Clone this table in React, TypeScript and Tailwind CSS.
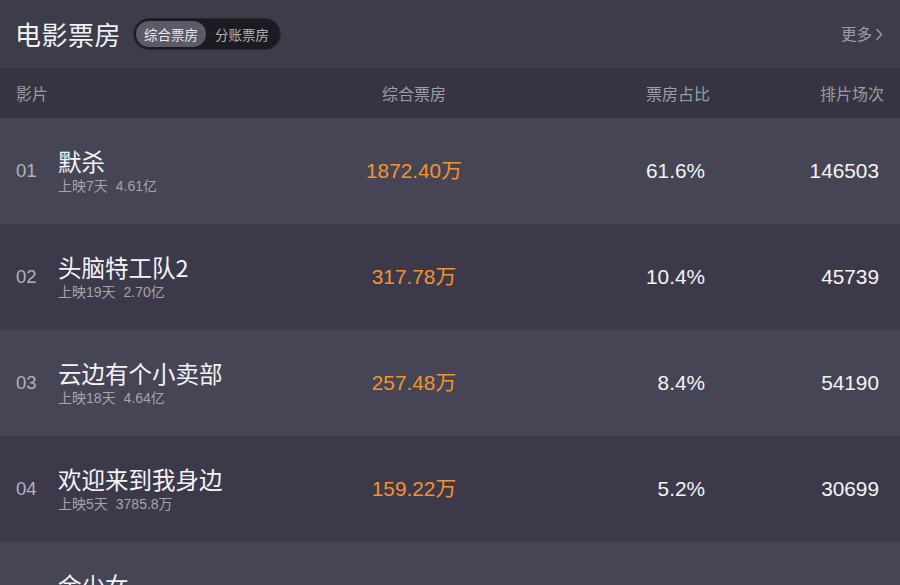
import React from "react";

const rows = [
  { rank: "01", name: "默杀", days: "上映7天", total: "4.61亿", box: "1872.40万", pct: "61.6%", shows: "146503" },
  { rank: "02", name: "头脑特工队2", days: "上映19天", total: "2.70亿", box: "317.78万", pct: "10.4%", shows: "45739" },
  { rank: "03", name: "云边有个小卖部", days: "上映18天", total: "4.64亿", box: "257.48万", pct: "8.4%", shows: "54190" },
  { rank: "04", name: "欢迎来到我身边", days: "上映5天", total: "3785.8万", box: "159.22万", pct: "5.2%", shows: "30699" },
  { rank: "05", name: "余少女", days: "上映3天", total: "1203.5万", box: "98.61万", pct: "3.2%", shows: "21034" },
];

const cjk = { fontFamily: '"Noto Sans CJK SC", "Noto Sans", sans-serif' };
const num = { fontFamily: '"Liberation Sans", Arial, "Noto Sans CJK SC", sans-serif' };

export default function App() {
  return (
    <div className="w-[900px] h-[585px] overflow-hidden bg-[#3d3c4b]" style={cjk}>
      <div className="h-[68px] flex items-center pl-[15px] pr-4 justify-between">
        <div className="flex items-center">
          <div className="text-[26px] text-[#f2f2f4] leading-none tracking-[0.5px]">电影票房</div>
          <div className="ml-[12px] flex items-center h-[32px] rounded-full bg-[#1c1b22] p-[2px] border border-[#2a2931]">
            <div className="h-full flex items-center px-[8px] rounded-full bg-[#5b5a67] text-[13.5px] text-[#e8e8ec]">综合票房</div>
            <div className="h-full flex items-center px-[9px] text-[13.5px] text-[#b5b4bc]">分账票房</div>
          </div>
        </div>
        <div className="flex items-center text-[15.5px] text-[#9e9da6] mr-[1px]">
          <span>更多</span>
          <svg width="8" height="13" viewBox="0 0 8 13" className="ml-[3px]">
            <path d="M1.5 1 L6.5 6.5 L1.5 12" stroke="#9e9da6" strokeWidth="1.3" fill="none" />
          </svg>
        </div>
      </div>
      <div className="h-[50px] flex items-center px-4 bg-[#363442] text-[16px] text-[#9d9ca5]">
        <div className="w-[310px]">影片</div>
        <div className="w-[176px] text-center">综合票房</div>
        <div className="w-[208px] text-right">票房占比</div>
        <div className="flex-1 text-right">排片场次</div>
      </div>
      {rows.map((r, i) => (
        <div
          key={r.rank}
          className={`h-[106px] flex items-center px-4 ${i % 2 === 0 ? "bg-[#464555]" : "bg-[#3c3a4a]"}`}
        >
          <div className="w-[310px] flex items-center">
            <div className="w-[42px] text-[18.5px] text-[#b3b2ba]" style={num}>{r.rank}</div>
            <div className="flex flex-col">
              <div className="text-[23.5px] leading-[30px] text-[#f4f4f6]">{r.name}</div>
              <div className="text-[14px] leading-[20px] text-[#a5a4ad] flex gap-[8px]" style={num}>
                <span>{r.days}</span>
                <span>{r.total}</span>
              </div>
            </div>
          </div>
          <div className="w-[176px] text-center text-[20.8px] text-[#f39330]" style={num}>{r.box}</div>
          <div className="w-[208px] text-right text-[20.8px] text-[#f4f4f6] pr-[5px]" style={num}>{r.pct}</div>
          <div className="flex-1 text-right text-[20.8px] text-[#f4f4f6] pr-[5px]" style={num}>{r.shows}</div>
        </div>
      ))}
    </div>
  );
}
